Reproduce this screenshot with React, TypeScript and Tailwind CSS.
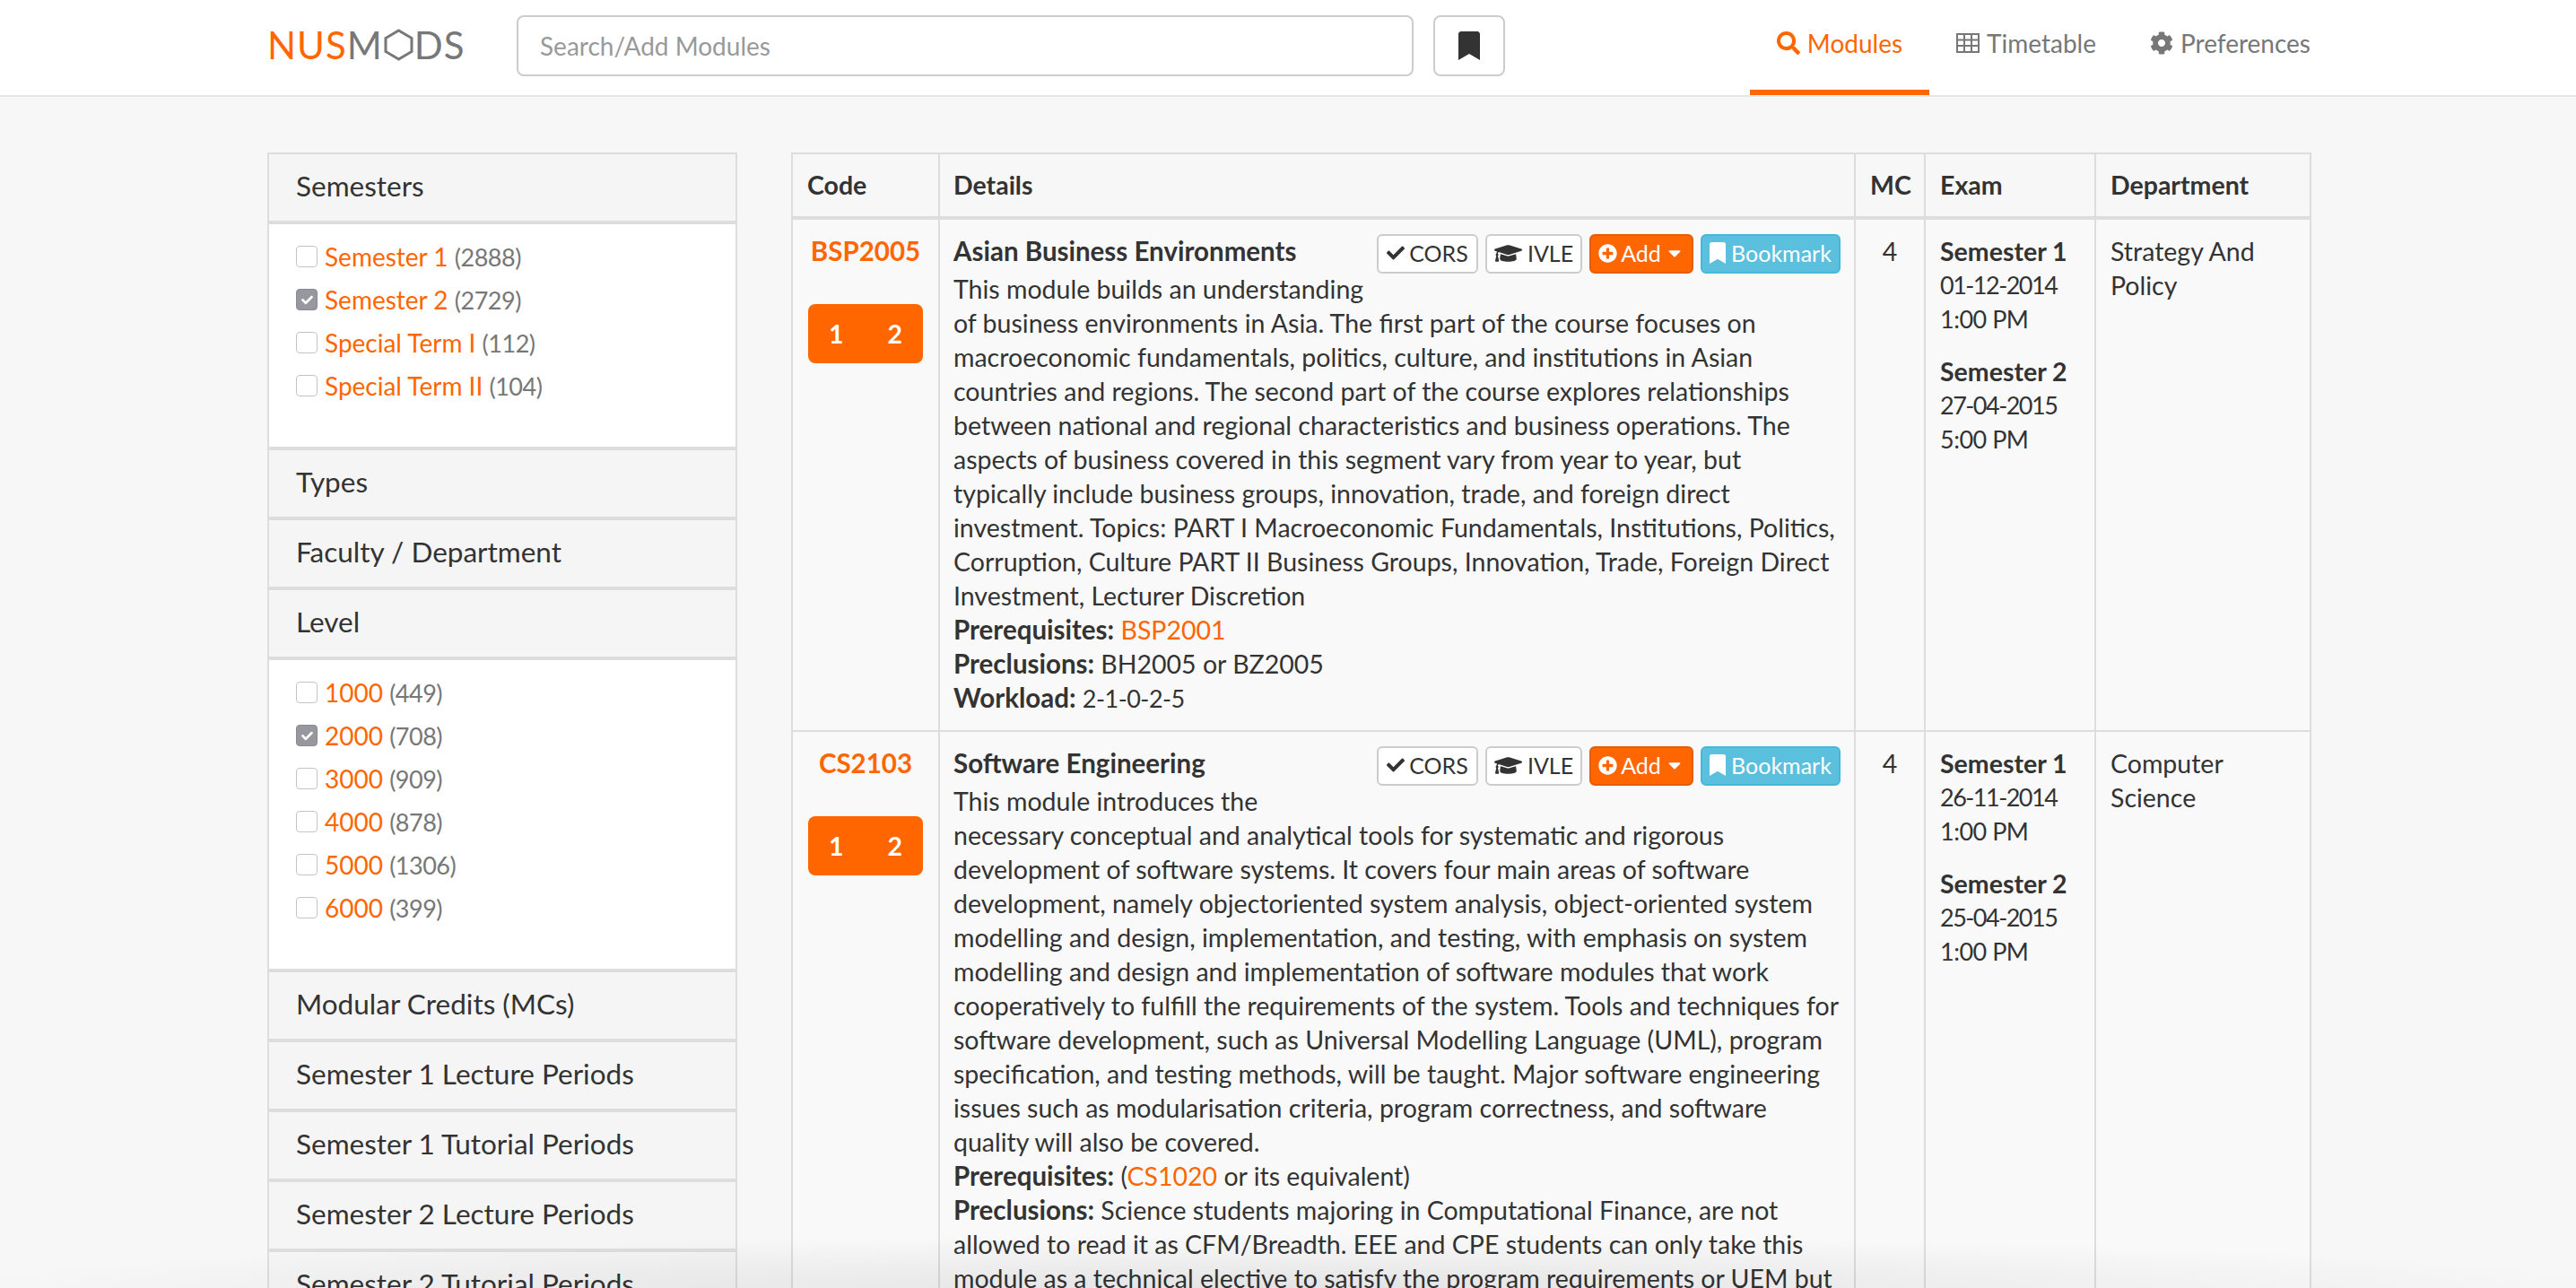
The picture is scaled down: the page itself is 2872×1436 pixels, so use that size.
import React from 'react';
import { FaSearch, FaCog, FaCheck, FaGraduationCap, FaPlusCircle, FaBookmark, FaCaretDown } from 'react-icons/fa';

interface Module {
  code: string;
  title: string;
  description: string[];
  prereq: React.ReactNode;
  preclusion: string[];
  workload?: string;
  exams: { sem: string; date: string; time: string }[];
  department: string[];
}

const modules: Module[] = [
  {
    code: 'BSP2005',
    title: 'Asian Business Environments',
    description: [
      'This module builds an understanding',
      'of business environments in Asia. The first part of the course focuses on',
      'macroeconomic fundamentals, politics, culture, and institutions in Asian',
      'countries and regions. The second part of the course explores relationships',
      'between national and regional characteristics and business operations. The',
      'aspects of business covered in this segment vary from year to year, but',
      'typically include business groups, innovation, trade, and foreign direct',
      'investment. Topics: PART I Macroeconomic Fundamentals, Institutions, Politics,',
      'Corruption, Culture PART II Business Groups, Innovation, Trade, Foreign Direct',
      'Investment, Lecturer Discretion',
    ],
    prereq: <a className="text-[#ff6600]">BSP2001</a>,
    preclusion: ['BH2005 or BZ2005'],
    workload: '2-1-0-2-5',
    exams: [
      { sem: 'Semester 1', date: '01-12-2014', time: '1:00 PM' },
      { sem: 'Semester 2', date: '27-04-2015', time: '5:00 PM' },
    ],
    department: ['Strategy And', 'Policy'],
  },
  {
    code: 'CS2103',
    title: 'Software Engineering',
    description: [
      'This module introduces the',
      'necessary conceptual and analytical tools for systematic and rigorous',
      'development of software systems. It covers four main areas of software',
      'development, namely objectoriented system analysis, object-oriented system',
      'modelling and design, implementation, and testing, with emphasis on system',
      'modelling and design and implementation of software modules that work',
      'cooperatively to fulfill the requirements of the system. Tools and techniques for',
      'software development, such as Universal Modelling Language (UML), program',
      'specification, and testing methods, will be taught. Major software engineering',
      'issues such as modularisation criteria, program correctness, and software',
      'quality will also be covered.',
    ],
    prereq: (
      <>
        (<a className="text-[#ff6600]">CS1020</a> or its equivalent)
      </>
    ),
    preclusion: [
      'Science students majoring in Computational Finance, are not',
      'allowed to read it as CFM/Breadth. EEE and CPE students can only take this',
      'module as a technical elective to satisfy the program requirements or UEM but',
    ],
    exams: [
      { sem: 'Semester 1', date: '26-11-2014', time: '1:00 PM' },
      { sem: 'Semester 2', date: '25-04-2015', time: '1:00 PM' },
    ],
    department: ['Computer', 'Science'],
  },
];

function Checkbox({ checked }: { checked?: boolean }) {
  return checked ? (
    <span className="w-[24px] h-[24px] rounded-[4px] bg-[#97979f] border border-[#8a8a92] flex items-center justify-center shrink-0">
      <FaCheck className="w-[13px] h-[13px] text-white" />
    </span>
  ) : (
    <span className="w-[24px] h-[24px] rounded-[4px] bg-white border border-[#c4c4c4] shrink-0" />
  );
}

function FilterRow({ label, count, checked }: { label: string; count: number; checked?: boolean }) {
  return (
    <div className="flex items-center h-[48px] gap-[8px] text-[28px]">
      <Checkbox checked={checked} />
      <span>
        <a className="text-[#ff6600]">{label}</a>{' '}
        <span className="text-[#777777] text-[27px] tracking-[-0.5px]">({count})</span>
      </span>
    </div>
  );
}

function PanelHeading({ title }: { title: string }) {
  return (
    <div className="h-[78px] px-[30px] pb-[5px] flex items-center whitespace-nowrap bg-[#f5f5f5] border-b-[4px] border-[#dddddd] text-[#333333] text-[31.5px]">
      {title}
    </div>
  );
}

function NavItem({ icon, label, active }: { icon: React.ReactNode; label: string; active?: boolean }) {
  return (
    <a
      className={`h-[106px] px-[30px] pb-[4px] flex items-center gap-[8px] border-b-[6px] text-[28px] ${
        active ? 'border-[#ff6600] text-[#ff6600]' : 'border-transparent text-[#777777]'
      }`}
    >
      {icon}
      {label}
    </a>
  );
}

function ModuleRow({ mod }: { mod: Module }) {
  return (
    <tr className="align-top bg-[#f9f9f9]">
      <td className="border-2 border-[#dddddd] px-[17px] pt-[16px]">
        <div className="text-center font-bold text-[#ff6600] text-[29.5px]">{mod.code}</div>
        <div className="mt-[40px] h-[66px] rounded-[8px] bg-[#ff6600] flex items-center justify-between px-[23px] text-white font-bold">
          <span>1</span>
          <span>2</span>
        </div>
      </td>
      <td className="border-2 border-[#dddddd] px-[15px] pt-[16px] pb-[16px] whitespace-nowrap">
        <div className="flex items-start justify-between h-[42px]">
          <span className="font-bold text-[29.5px]">{mod.title}</span>
          <div className="flex gap-[8px] text-[25px] leading-[40px]">
            <a className="w-[113px] h-[44px] pb-[2px] flex items-center justify-center gap-[5px] bg-white border-2 border-[#cccccc] rounded-[6px]">
              <FaCheck className="w-[20px] h-[20px]" />
              CORS
            </a>
            <a className="w-[108px] h-[44px] pb-[2px] flex items-center justify-center gap-[6px] bg-white border-2 border-[#cccccc] rounded-[6px]">
              <FaGraduationCap className="w-[31px] h-[31px]" />
              IVLE
            </a>
            <a className="w-[116px] h-[44px] pb-[2px] flex items-center justify-center gap-[4px] bg-[#ff6600] border-2 border-[#e65c00] rounded-[6px] text-white">
              <FaPlusCircle className="w-[21px] h-[21px]" />
              Add
              <FaCaretDown className="w-[22px] h-[22px]" />
            </a>
            <a className="w-[156px] h-[44px] pb-[2px] flex items-center justify-center gap-[6px] bg-[#5bc0de] border-2 border-[#46b8da] rounded-[6px] text-white">
              <FaBookmark className="w-[18px] h-[24px]" />
              Bookmark
            </a>
          </div>
        </div>
        {mod.description.map(line => (
          <div key={line}>{line}</div>
        ))}
        <div>
          <b className="text-[29.5px]">Prerequisites:</b> {mod.prereq}
        </div>
        {mod.preclusion.map((line, i) => (
          <div key={line}>
            {i === 0 && <b className="text-[29.5px]">Preclusions: </b>}
            {line}
          </div>
        ))}
        {mod.workload && (
          <div>
            <b className="text-[29.5px]">Workload:</b> <span className="text-[27px] tracking-[-0.5px]">{mod.workload}</span>
          </div>
        )}
      </td>
      <td className="border-2 border-[#dddddd] pt-[16px] text-center">4</td>
      <td className="border-2 border-[#dddddd] px-[16px] pt-[16px]">
        {mod.exams.map(e => (
          <div key={e.sem} className="mb-[20px]">
            <div className="font-bold">{e.sem}</div>
            <div className="text-[27px] tracking-[-1.5px]">{e.date}</div>
            <div className="text-[27px] tracking-[-0.5px]">{e.time}</div>
          </div>
        ))}
      </td>
      <td className="border-2 border-[#dddddd] px-[16px] pt-[16px]">
        {mod.department.map(d => (
          <div key={d}>{d}</div>
        ))}
      </td>
    </tr>
  );
}

export default function App() {
  const headings = ['Code', 'Details', 'MC', 'Exam', 'Department'];
  const widths = ['w-[164px]', 'w-[1021px]', 'w-[78px]', 'w-[190px]', 'w-[240px]'];

  return (
    <div className="relative h-screen overflow-hidden bg-[#f7f7f7] font-['Lato','Liberation_Sans',sans-serif] text-[#333333] text-[28.5px] leading-[38px]">
      <header className="h-[108px] bg-white border-b-2 border-[#e7e7e7] pl-[298px] pr-[266px] flex items-start">
        <div className="h-[100px] flex items-center text-[42px] tracking-[1px] w-[278px] shrink-0">
          <span className="text-[#ff6600]">NUS</span>
          <span className="text-[#777777]">M</span>
          <svg viewBox="0 0 33 36" className="w-[33px] h-[36px] mx-[1px]" fill="none" stroke="#777777" strokeWidth="3">
            <path d="M16.5 2 L31 10.5 V25.5 L16.5 34 L2 25.5 V10.5 Z" />
          </svg>
          <span className="text-[#777777]">DS</span>
        </div>
        <div className="pt-[17px] flex items-start gap-[22px]">
          <div className="w-[1000px] h-[68px] flex items-center px-[24px] bg-white border-2 border-[#cccccc] rounded-[8px] text-[#999999] text-[28px]">
            Search/Add Modules
          </div>
          <div className="w-[80px] h-[68px] flex items-center justify-center bg-white border-2 border-[#cccccc] rounded-[8px]">
            <FaBookmark className="w-[26px] h-[32px] text-[#333333]" />
          </div>
        </div>
        <nav className="ml-auto flex">
          <NavItem active icon={<FaSearch className="w-[26px] h-[26px]" />} label="Modules" />
          <NavItem
            icon={
              <svg viewBox="0 0 26 22" className="w-[26px] h-[22px]" fill="none" stroke="#777777" strokeWidth="2">
                <path d="M1 1 H25 V21 H1 Z M1 7.5 H25 M1 14 H25 M9 1 V21 M17 1 V21" />
              </svg>
            }
            label="Timetable"
          />
          <NavItem icon={<FaCog className="w-[26px] h-[26px]" />} label="Preferences" />
        </nav>
      </header>

      <main className="px-[296px] pt-[62px] flex gap-[60px] items-start">
        <aside className="ml-[2px] w-[524px] shrink-0 border-x-2 border-t-2 border-[#dddddd]">
          <PanelHeading title="Semesters" />
          <div className="bg-white px-[30px] pt-[12px] pb-[44px] border-b-[4px] border-[#dddddd]">
            <FilterRow label="Semester 1" count={2888} />
            <FilterRow label="Semester 2" count={2729} checked />
            <FilterRow label="Special Term I" count={112} />
            <FilterRow label="Special Term II" count={104} />
          </div>
          <PanelHeading title="Types" />
          <PanelHeading title="Faculty / Department" />
          <PanelHeading title="Level" />
          <div className="bg-white px-[30px] pt-[12px] pb-[44px] border-b-[4px] border-[#dddddd]">
            <FilterRow label="1000" count={449} />
            <FilterRow label="2000" count={708} checked />
            <FilterRow label="3000" count={909} />
            <FilterRow label="4000" count={878} />
            <FilterRow label="5000" count={1306} />
            <FilterRow label="6000" count={399} />
          </div>
          <PanelHeading title="Modular Credits (MCs)" />
          <PanelHeading title="Semester 1 Lecture Periods" />
          <PanelHeading title="Semester 1 Tutorial Periods" />
          <PanelHeading title="Semester 2 Lecture Periods" />
          <PanelHeading title="Semester 2 Tutorial Periods" />
        </aside>

        <table className="w-[1693px] table-fixed border-collapse shrink-0">
          <thead>
            <tr>
              {headings.map((h, i) => (
                <th
                  key={h}
                  className={`${widths[i]} h-[72px] pb-[2px] border-2 border-b-[4px] border-[#dddddd] ${
                    i === 1 ? 'px-[15px]' : 'px-[16px]'
                  } text-left font-bold bg-[#f7f7f7]`}
                >
                  {h}
                </th>
              ))}
            </tr>
          </thead>
          <tbody>
            {modules.map(m => (
              <ModuleRow key={m.code} mod={m} />
            ))}
          </tbody>
        </table>
      </main>

      {/* soft shadow along the bottom of the window */}
      <div className="absolute inset-x-0 bottom-0 h-[60px] bg-[radial-gradient(ellipse_52%_100%_at_50%_100%,#00000016,transparent)] pointer-events-none" />
    </div>
  );
}
